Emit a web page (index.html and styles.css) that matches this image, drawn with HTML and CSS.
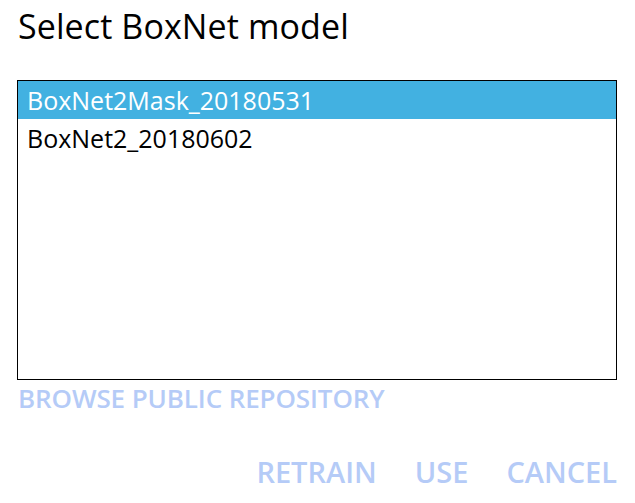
FILE: index.html
```html
<!DOCTYPE html>
<html>
<head>
<meta charset="utf-8">
<link rel="stylesheet" href="styles.css">
</head>
<body>
<div class="dialog">
  <h1 class="title">Select BoxNet model</h1>
  <div class="list">
    <div class="item selected">BoxNet2Mask_20180531</div>
    <div class="item">BoxNet2_20180602</div>
  </div>
  <div class="browse">BROWSE PUBLIC REPOSITORY</div>
  <div class="actions">
    <span class="btn">RETRAIN</span>
    <span class="btn">USE</span>
    <span class="btn">CANCEL</span>
  </div>
</div>
</body>
</html>
```
FILE: styles.css
```css
html, body {
  margin: 0;
  padding: 0;
  background: #fff;
}
.dialog {
  width: 635px;
  height: 503px;
  box-sizing: border-box;
  padding: 4px 18px 0 17px;
  font-family: "Open Sans", sans-serif;
  color: #000;
}
.title {
  margin: 0;
  font-weight: 400;
  font-size: 34px;
  line-height: 44px;
  padding-left: 1px;
  letter-spacing: 0.1px;
}
.list {
  margin-top: 32px;
  height: 298px;
  border: 1px solid #000;
  padding: 0;
}
.item {
  height: 38px;
  line-height: 38px;
  font-size: 25px;
  padding-left: 9px;
}
.item.selected {
  background: #42b1e1;
  color: #fff;
}
.browse {
  margin-top: 3px;
  padding-left: 1px;
  font-size: 26px;
  font-weight: 600;
  color: #b5cbf7;
  line-height: 30px;
  letter-spacing: -0.1px;
}
.actions {
  margin-top: 43px;
  display: flex;
  justify-content: flex-end;
  gap: 38px;
}
.btn {
  font-size: 29px;
  font-weight: 600;
  color: #b5cbf7;
  line-height: 32px;
}
```
